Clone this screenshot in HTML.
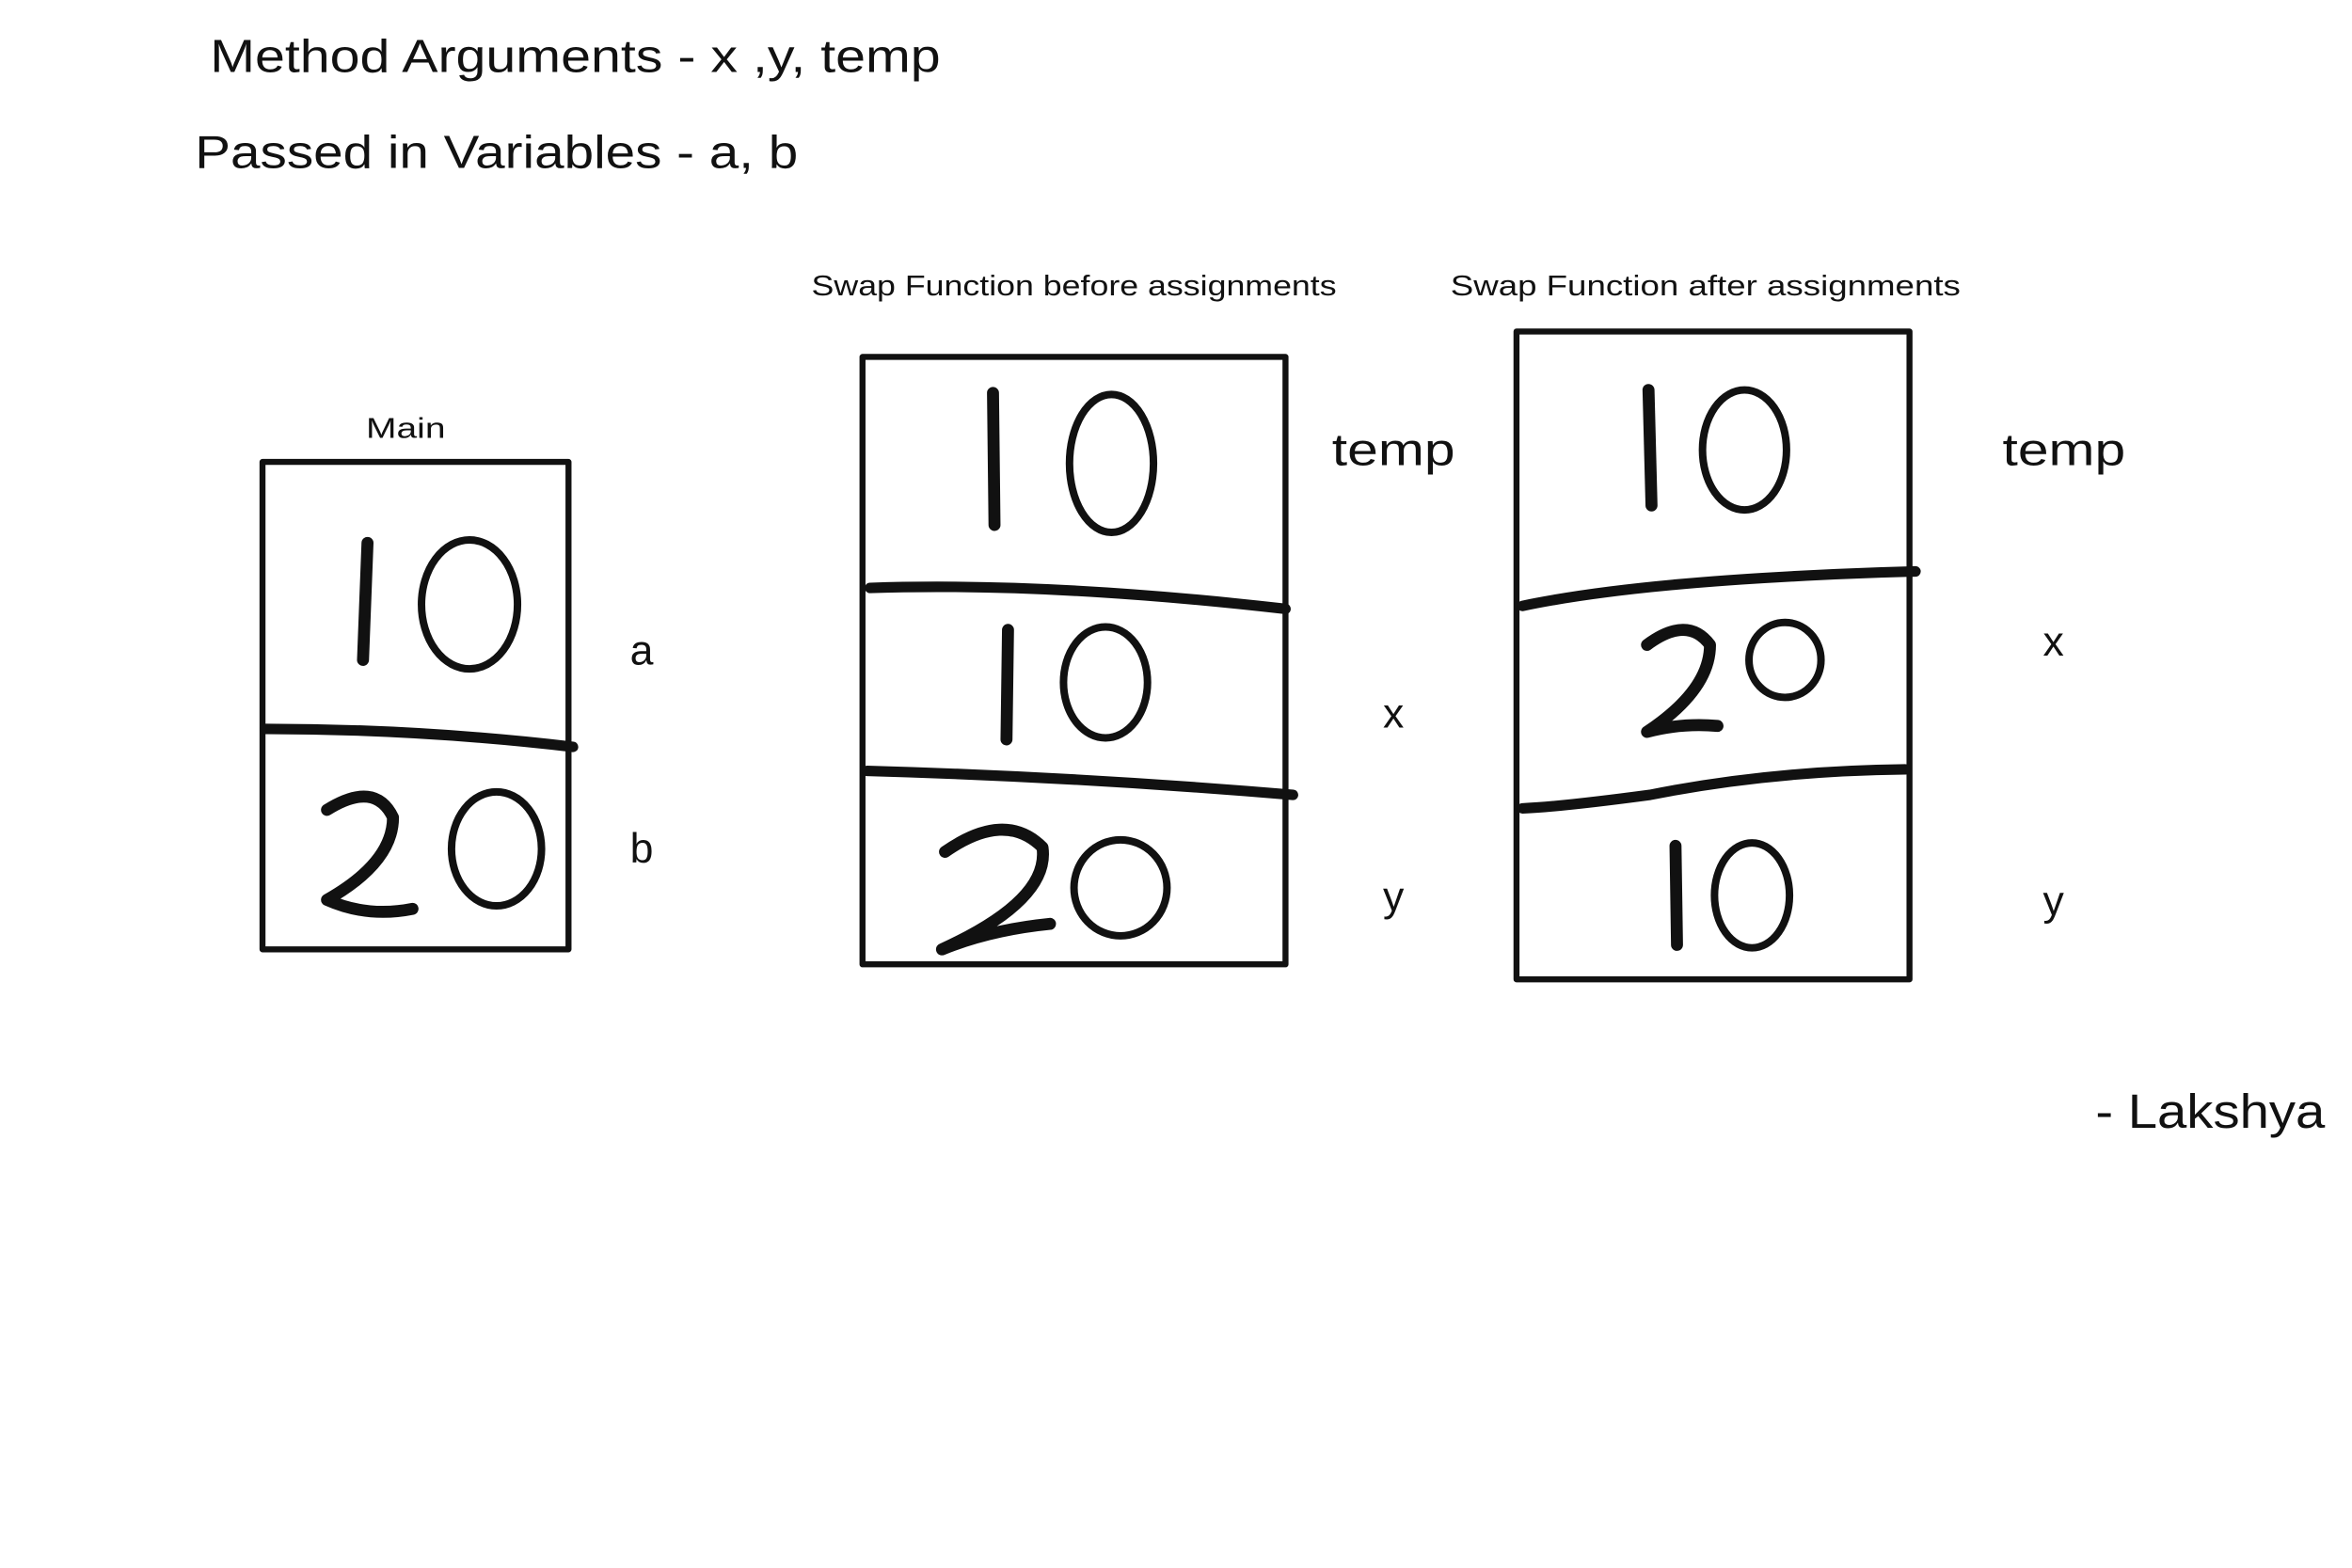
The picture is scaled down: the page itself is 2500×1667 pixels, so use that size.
<!DOCTYPE html>
<html><head><meta charset="utf-8"><style>
html,body{margin:0;padding:0;background:#fff;}
svg{display:block}
text{font-family:"Liberation Sans",sans-serif;fill:#111}
</style></head><body>
<svg width="2500" height="1667" viewBox="0 0 1568 1045.5" xmlns="http://www.w3.org/2000/svg">
<rect width="1568" height="1046" fill="#fff"/>
<text x="140" y="48" font-size="31" textLength="487" lengthAdjust="spacingAndGlyphs">Method Arguments - x ,y, temp</text>
<text x="130" y="112" font-size="31" textLength="402" lengthAdjust="spacingAndGlyphs">Passed in Variables -  a, b</text>
<text x="541" y="197" font-size="19" textLength="350" lengthAdjust="spacingAndGlyphs">Swap Function before assignments</text>
<text x="967" y="197" font-size="19" textLength="340" lengthAdjust="spacingAndGlyphs">Swap Function after assignments</text>
<text x="244" y="292" font-size="19" textLength="53" lengthAdjust="spacingAndGlyphs">Main</text>
<text x="420" y="443" font-size="28">a</text>
<text x="420" y="575" font-size="28">b</text>
<text x="888" y="310" font-size="30" textLength="82" lengthAdjust="spacingAndGlyphs">temp</text>
<text x="922" y="485" font-size="28">x</text>
<text x="922" y="607" font-size="28">y</text>
<text x="1335" y="310" font-size="30" textLength="82" lengthAdjust="spacingAndGlyphs">temp</text>
<text x="1362" y="437" font-size="28">x</text>
<text x="1362" y="610" font-size="28">y</text>
<text x="1397" y="752" font-size="32" textLength="153" lengthAdjust="spacingAndGlyphs">- Lakshya</text>
<g fill="none" stroke="#111" stroke-linecap="round" stroke-linejoin="round">
<g stroke-width="4">
<rect x="175" y="308" width="204" height="325"/>
<rect x="575" y="238" width="282" height="405"/>
<rect x="1011" y="221" width="262" height="432"/>
</g>
<g stroke-width="7">
<path d="M177 486 Q280 486 382 498"/>
<path d="M580 392 Q700 388 857 406"/>
<path d="M578 514 Q720 518 862 530"/>
<path d="M1015 404 Q1100 386 1277 381"/>
<path d="M1015 539 Q1040 538 1100 530 Q1180 514 1270 513"/>
</g>
<g stroke-width="8">
<path d="M245 362 L242 440"/>
<path d="M662 262 L663 350"/>
<path d="M672 420 L671 493"/>
<path d="M1099 260 L1101 337"/>
<path d="M1117 564 L1118 630"/>
<path d="M218 540 Q250 520 262 545 Q262 575 218 600 Q245 612 275 606"/>
<path d="M630 568 Q670 540 695 565 Q700 600 628 633 Q660 620 700 616"/>
<path d="M1098 430 Q1125 410 1140 430 Q1140 460 1098 488 Q1120 482 1145 484"/>
</g>
<g stroke-width="5">
<ellipse cx="313" cy="403" rx="32" ry="43"/>
<ellipse cx="331" cy="566" rx="30" ry="38"/>
<ellipse cx="741" cy="309" rx="28" ry="46"/>
<ellipse cx="737" cy="455" rx="28" ry="37"/>
<ellipse cx="747" cy="592" rx="31" ry="32"/>
<ellipse cx="1163" cy="300" rx="28" ry="40"/>
<ellipse cx="1190" cy="440" rx="24" ry="25"/>
<ellipse cx="1168" cy="597" rx="25" ry="35"/>
</g>
</g>
</svg>
</body></html>
